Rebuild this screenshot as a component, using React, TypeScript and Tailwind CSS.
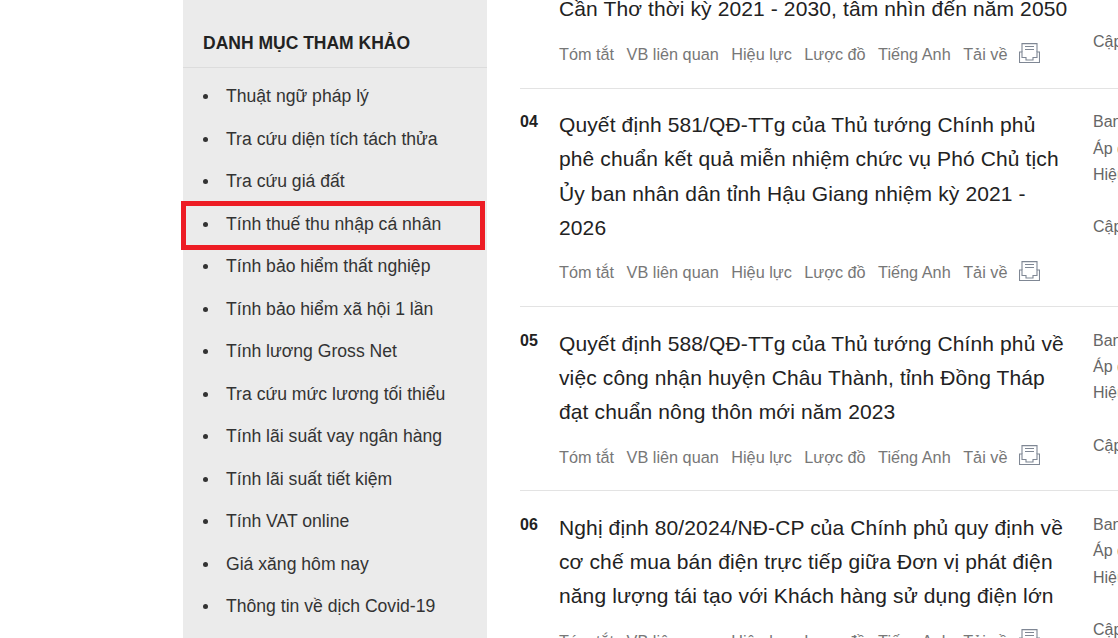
const menuItems = [
  'Thuật ngữ pháp lý',
  'Tra cứu diện tích tách thửa',
  'Tra cứu giá đất',
  'Tính thuế thu nhập cá nhân',
  'Tính bảo hiểm thất nghiệp',
  'Tính bảo hiểm xã hội 1 lần',
  'Tính lương Gross Net',
  'Tra cứu mức lương tối thiểu',
  'Tính lãi suất vay ngân hàng',
  'Tính lãi suất tiết kiệm',
  'Tính VAT online',
  'Giá xăng hôm nay',
  'Thông tin về dịch Covid-19',
];

const docs = [
  { num: '', title: ['Cần Thơ thời kỳ 2021 - 2030, tâm nhìn đến năm 2050'], meta: false },
  {
    num: '04',
    title: [
      'Quyết định 581/QĐ-TTg của Thủ tướng Chính phủ',
      'phê chuẩn kết quả miễn nhiệm chức vụ Phó Chủ tịch',
      'Ủy ban nhân dân tỉnh Hậu Giang nhiệm kỳ 2021 -',
      '2026',
    ],
    meta: true,
  },
  {
    num: '05',
    title: [
      'Quyết định 588/QĐ-TTg của Thủ tướng Chính phủ về',
      'việc công nhận huyện Châu Thành, tỉnh Đồng Tháp',
      'đạt chuẩn nông thôn mới năm 2023',
    ],
    meta: true,
  },
  {
    num: '06',
    title: [
      'Nghị định 80/2024/NĐ-CP của Chính phủ quy định về',
      'cơ chế mua bán điện trực tiếp giữa Đơn vị phát điện',
      'năng lượng tái tạo với Khách hàng sử dụng điện lớn',
    ],
    meta: true,
  },
];

const links = ['Tóm tắt', 'VB liên quan', 'Hiệu lực', 'Lược đồ', 'Tiếng Anh', 'Tải về'];

function SaveIcon() {
  return (
    <svg width="21" height="20" viewBox="0 0 21 20" fill="none" stroke="#7f8794" strokeWidth="1.1" className="mt-[-3px] ml-[-1px] shrink-0">
      <path d="M3 9V0.6H18V9" />
      <path d="M6 3.5H15M6 6.5H15" />
      <path d="M0.5 9H3V14.5H7V17H14V14.5H18V9H20.5V19.5H0.5V9Z" />
    </svg>
  );
}

function DocRow({ doc }: { doc: (typeof docs)[number] }) {
  return (
    <div className="flex border-b border-[#e3e3e3] pt-[19.6px] pb-[21.5px] first:pt-0 last:border-b-0">
      <div className="w-[39px] shrink-0 pt-[1px] text-[16px] leading-[26px] font-bold text-[#222]">{doc.num}</div>
      <div className="w-[534px] shrink-0">
        <div className="text-[21px] leading-[34.2px] tracking-[0.12px] text-[#222]">
          {doc.title.map((line) => (
            <div key={line} className="whitespace-nowrap">
              {line}
            </div>
          ))}
        </div>
        <div className="mt-[15.5px] flex h-6 items-center gap-[12.5px] text-[16.25px] text-[#777]">
          {links.map((link) => (
            <span key={link} className="whitespace-nowrap">
              {link}
            </span>
          ))}
          <SaveIcon />
        </div>
      </div>
      <div className="whitespace-nowrap pt-[1px] text-[16px] leading-[26.4px] text-[#666]">
        {doc.meta ? (
          <>
            <div>Ban hành:</div>
            <div>Áp dụng:</div>
            <div>Hiệu lực:</div>
            <div className="mt-[26px]">Cập nhật:</div>
          </>
        ) : (
          <div className="mt-[36px]">Cập nhật:</div>
        )}
      </div>
    </div>
  );
}

export default function App() {
  return (
    <div className="flex h-[638px] overflow-hidden bg-white font-['Liberation_Sans',Arial,sans-serif]">
      <aside className="ml-[183px] w-[304px] shrink-0 bg-[#ebebeb]">
        <h3 className="mt-[33px] border-b border-[#dcdcdc] px-5 pb-[13px] text-[17.5px] leading-[21px] font-bold text-[#222]">
          DANH MỤC THAM KHẢO
        </h3>
        <ul className="mt-[7.4px]">
          {menuItems.map((item, i) => (
            <li key={item} className="relative flex h-[42.5px] items-center text-[17.6px] text-[#333]">
              <span className="ml-[20px] h-[5px] w-[5px] rounded-full bg-[#333]" />
              <span className="ml-[18px] whitespace-nowrap">{item}</span>
              {i === 3 && <span className="absolute top-[-2px] left-[-2px] h-[49px] w-[304px] border-[5px] border-[#ed1c24]" />}
            </li>
          ))}
        </ul>
      </aside>
      <main className="ml-[33px] mt-[-7.6px] w-[598px] shrink-0">
        {docs.map((doc) => (
          <DocRow key={doc.title[0]} doc={doc} />
        ))}
      </main>
    </div>
  );
}
